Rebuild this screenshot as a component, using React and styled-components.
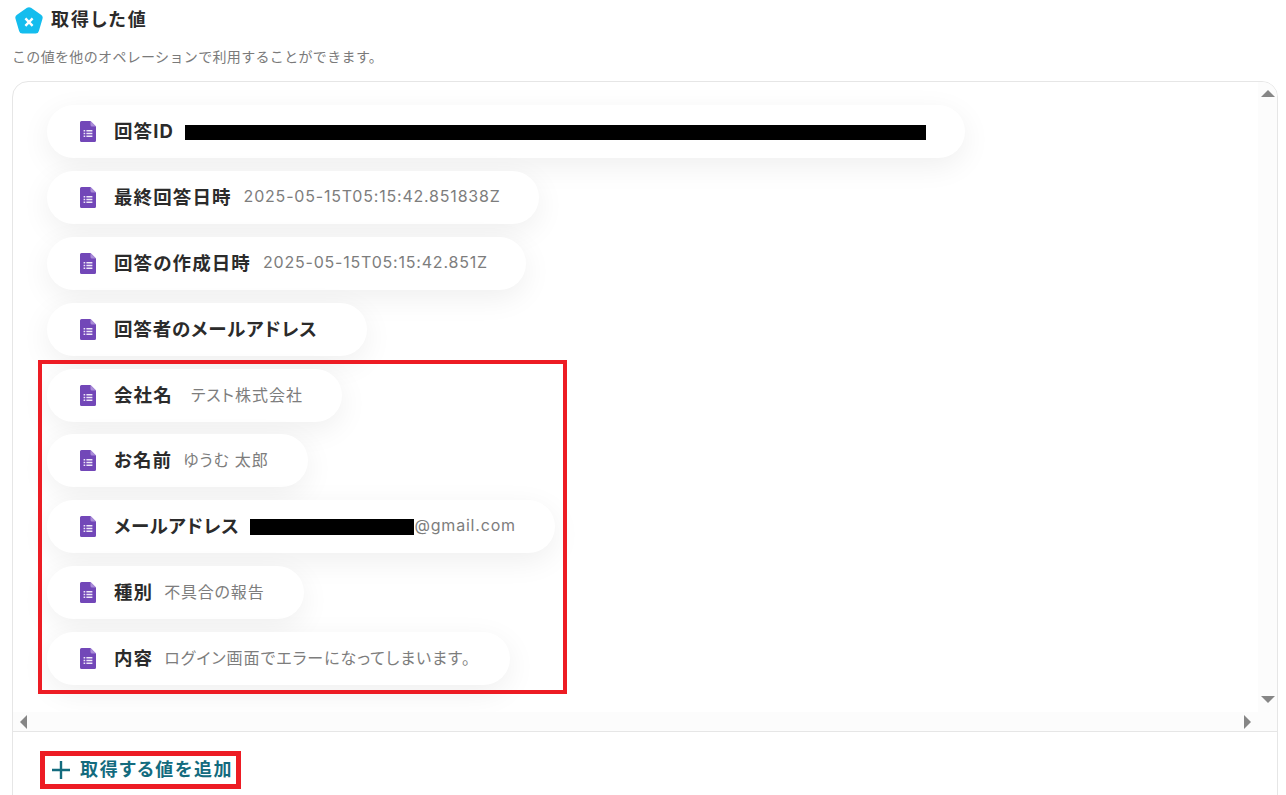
import React from "react";
import styled, { createGlobalStyle } from "styled-components";

const Global = createGlobalStyle`
  html, body { margin: 0; padding: 0; height: 795px; overflow: hidden; background: #fff; }
  body {
    font-family: Inter, "Noto Sans CJK JP", "Noto Sans", sans-serif;
    font-feature-settings: "palt";
    color: #2b2b2b;
  }
  #root { height: 795px; }
`;

const Page = styled.div`
  position: relative;
  height: 795px;
  box-sizing: border-box;
  padding: 5px 8px 0 12px;
  display: flex;
  flex-direction: column;
  overflow: hidden;
`;

const Heading = styled.div`
  display: flex;
  align-items: center;
  gap: 8px;
  height: 30px;
  padding-left: 3px;
`;

const Title = styled.h2`
  margin: 0;
  font-size: 18px;
  font-weight: 700;
  letter-spacing: 1.9px;
  line-height: 30px;
  color: #2b2b2b;
`;

const Description = styled.p`
  margin: 12px 0 0;
  font-size: 14px;
  line-height: 20px;
  letter-spacing: 0.34px;
  font-feature-settings: normal;
  color: #7a7a7a;
`;

const Panel = styled.section`
  margin-top: 14px;
  width: 1266px;
  height: 740px;
  flex: none;
  box-sizing: border-box;
  border: 1px solid #e6e6e6;
  border-radius: 16px 16px 0 0;
  display: flex;
  flex-direction: column;
  overflow: hidden;
`;

const ScrollFrame = styled.div`
  display: grid;
  grid-template-columns: 1fr 19px;
  grid-template-rows: 630px 19px;
  border-bottom: 1px solid #e6e6e6;
`;

const List = styled.ul`
  list-style: none;
  margin: 0;
  padding: 23px 0 0 34px;
  display: flex;
  flex-direction: column;
  align-items: flex-start;
  gap: 12.9px;
  overflow: hidden;
`;

const Pill = styled.li`
  display: flex;
  align-items: center;
  height: 53px;
  box-sizing: border-box;
  padding: 0 ${(p) => p.$pad}px 0 33px;
  border-radius: 27px;
  background: #fff;
  box-shadow: 0 8px 30px rgba(0, 0, 0, 0.065);
`;

const Label = styled.span`
  margin-left: 18px;
  padding-bottom: 3px;
  font-size: 18.5px;
  font-weight: 700;
  letter-spacing: ${(p) => p.$ls ?? 1.1}px;
  color: #2b2b2b;
  white-space: nowrap;
`;

const Value = styled.span`
  margin-left: ${(p) => p.$gap ?? 12}px;
  padding-bottom: 3px;
  font-size: 16px;
  letter-spacing: ${(p) => p.$ls ?? 0.8}px;
  color: #7d7d7d;
  white-space: nowrap;
  display: flex;
  align-items: center;
`;

const Redaction = styled.span`
  display: inline-block;
  margin-top: 4px;
  background: #000;
  height: ${(p) => p.$h}px;
  width: ${(p) => p.$w}px;
`;

const VTrack = styled.div`
  background: #fcfcfc;
  display: flex;
  flex-direction: column;
  justify-content: space-between;
  align-items: center;
  padding: 8px 0 9px;
`;

const HTrack = styled.div`
  background: #fcfcfc;
  grid-column: 1 / 3;
  display: flex;
  justify-content: space-between;
  align-items: center;
  padding: 0 26px 0 7px;
`;

const Arrow = styled.span`
  width: 0;
  height: 0;
  border-style: solid;
  border-color: transparent;
  ${(p) => p.$dir === "up" && "border-width: 0 7px 7px; border-bottom-color: #868686;"}
  ${(p) => p.$dir === "down" && "border-width: 7px 7px 0; border-top-color: #868686;"}
  ${(p) => p.$dir === "left" && "border-width: 7px 7px 7px 0; border-right-color: #868686;"}
  ${(p) => p.$dir === "right" && "border-width: 7px 0 7px 7px; border-left-color: #868686;"}
`;

const Footer = styled.div`
  padding: 24px 0 0 38px;
`;

const AddButton = styled.button`
  display: flex;
  align-items: center;
  gap: 9px;
  padding: 0;
  border: 0;
  background: none;
  font: inherit;
  font-feature-settings: "palt";
  font-size: 18px;
  font-weight: 700;
  letter-spacing: 1.65px;
  line-height: 28px;
  color: #136b7e;
`;

const Highlight = styled.div`
  position: absolute;
  box-sizing: border-box;
  left: ${(p) => p.$x}px;
  top: ${(p) => p.$y}px;
  width: ${(p) => p.$w}px;
  height: ${(p) => p.$h}px;
  border: ${(p) => p.$b}px solid #ed1c24;
  pointer-events: none;
`;

const Logo = () => (
  <svg width="28" height="27" viewBox="0 0 28 27" aria-hidden="true">
    <path
      d="M12 .8a3.6 3.6 0 0 1 4 0l10 7a3.4 3.4 0 0 1 1.5 3.9l-3.6 12.3a3.4 3.4 0 0 1-3.3 2.5H7.4a3.4 3.4 0 0 1-3.3-2.5L.5 11.7A3.4 3.4 0 0 1 2 7.8z"
      fill="#14bdee"
    />
    <path d="M10.4 11.4l7.2 7.4M17.6 11.4l-7.2 7.4" stroke="#fff" strokeWidth="2.4" />
  </svg>
);

const FormIcon = () => (
  <svg width="16" height="21" viewBox="0 0 16 21" aria-hidden="true">
    <path d="M1.5 0H10.5L16 5.5V19.5a1.5 1.5 0 0 1-1.5 1.5H1.5A1.5 1.5 0 0 1 0 19.5V1.5A1.5 1.5 0 0 1 1.5 0z" fill="#7247b8" />
    <path d="M10.5 0L16 5.5H12a1.5 1.5 0 0 1-1.5-1.5z" fill="#a98bd8" />
    <path d="M3.6 9h1.6v1.5H3.6zM6.4 9h6v1.5h-6zM3.6 11.8h1.6v1.5H3.6zM6.4 11.8h6v1.5h-6zM3.6 14.6h1.6v1.5H3.6zM6.4 14.6h6v1.5h-6z" fill="#eee8f8" />
  </svg>
);

const rows = [
  { label: "回答ID", pad: 39, redact: [741, 15], gap: 11 },
  { label: "最終回答日時", value: "2025-05-15T05:15:42.851838Z", pad: 38 },
  { label: "回答の作成日時", value: "2025-05-15T05:15:42.851Z", pad: 38 },
  { label: "回答者のメールアドレス", pad: 49, labelLs: 0.85 },
  { label: "会社名", value: "テスト株式会社", pad: 39, gap: 18, ls: 1 },
  { label: "お名前", value: "ゆうむ 太郎", pad: 40, gap: 11 },
  { label: "メールアドレス", value: "@gmail.com", pad: 39, redact: [164, 16], gap: 11, labelLs: 0.7 },
  { label: "種別", value: "不具合の報告", pad: 40, gap: 11 },
  { label: "内容", value: "ログイン画面でエラーになってしまいます。", pad: 39, gap: 11, ls: 0.98 },
];

export default function App() {
  return (
    <Page>
      <Global />
      <Heading>
        <Logo />
        <Title>取得した値</Title>
      </Heading>
      <Description>この値を他のオペレーションで利用することができます。</Description>
      <Panel>
        <ScrollFrame>
          <List>
            {rows.map((r) => (
              <Pill key={r.label} $pad={r.pad}>
                <FormIcon />
                <Label $ls={r.labelLs}>{r.label}</Label>
                {(r.value || r.redact) && (
                  <Value $gap={r.gap} $ls={r.ls}>
                    {r.redact && <Redaction $w={r.redact[0]} $h={r.redact[1]} />}
                    {r.value}
                  </Value>
                )}
              </Pill>
            ))}
          </List>
          <VTrack>
            <Arrow $dir="up" />
            <Arrow $dir="down" />
          </VTrack>
          <HTrack>
            <Arrow $dir="left" />
            <Arrow $dir="right" />
          </HTrack>
        </ScrollFrame>
        <Footer>
          <AddButton>
            <svg width="20" height="20" viewBox="0 0 20 20" aria-hidden="true">
              <path d="M10 1v18M1 10h18" stroke="#136b7e" strokeWidth="2.4" />
            </svg>
            取得する値を追加
          </AddButton>
        </Footer>
      </Panel>
      <Highlight $x={38} $y={360} $w={529} $h={334} $b={4} />
      <Highlight $x={40} $y={751} $w={201} $h={38} $b={5} />
    </Page>
  );
}
